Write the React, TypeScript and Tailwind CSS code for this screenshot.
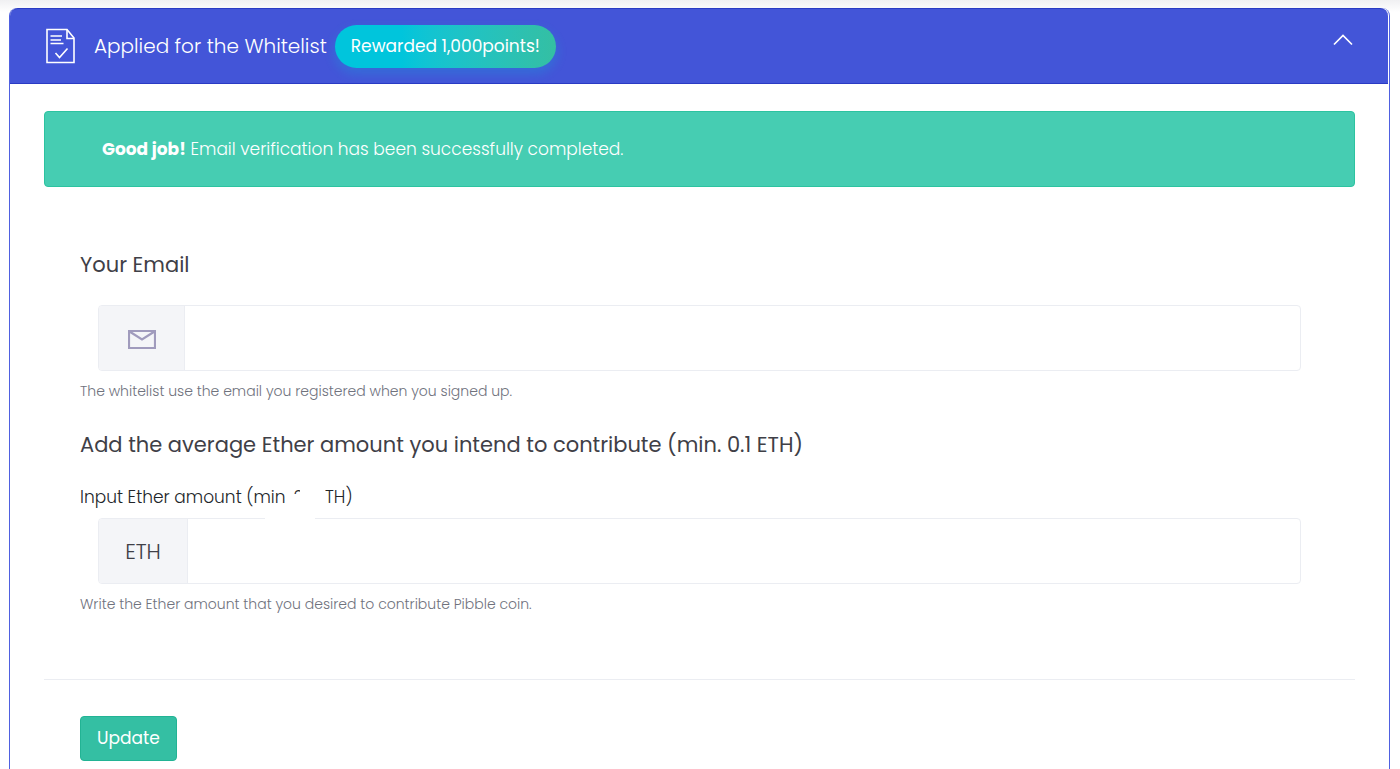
import type { ReactNode } from 'react';

interface FieldProps {
  id: string;
  type: string;
  addon: ReactNode;
  addonClass: string;
  hint: string;
}

function DocumentCheckIcon() {
  return (
    <svg width="30" height="36" viewBox="0 0 30 36" fill="none" stroke="white" strokeWidth="1.6" aria-hidden="true">
      <path d="M1 1.5H21L28 10V34.5H1Z" />
      <path d="M21 1.5V10.5H28" />
      <path d="M4.5 8H16M4.5 12H15M4.5 15.5H17.5" />
      <path d="M9.5 25L13.5 29.5L21.5 20.5" />
    </svg>
  );
}

function MailIcon() {
  return (
    <svg width="28" height="20" viewBox="0 0 28 20" fill="none" stroke="#a09bbd" strokeWidth="2.2" aria-hidden="true">
      <path d="M1 2H27V19H1Z" />
      <path d="M1.5 2.5L14 10.5L26.5 2.5" />
    </svg>
  );
}

function Field({ id, type, addon, addonClass, hint }: FieldProps) {
  return (
    <div>
      <div className="mx-[18px] flex h-[66px] overflow-hidden rounded border border-[#ebedf2] bg-white">
        <span className={`flex shrink-0 items-center justify-center border-r border-[#ebedf2] bg-[#f4f5f8] pt-0.5 ${addonClass}`}>
          {addon}
        </span>
        <input
          id={id}
          type={type}
          aria-describedby={`${id}-hint`}
          className="min-w-0 flex-1 bg-transparent px-5 text-lg text-[#575962] outline-none"
        />
      </div>
      <p id={`${id}-hint`} className="mt-2 text-sm leading-6 font-light text-[#6f727d]">
        {hint}
      </p>
    </div>
  );
}

export default function App() {
  return (
    <main className="bg-gradient-to-b from-[#f0f0f2] to-white to-[12px] px-[9px] pt-2 font-[Poppins,Inter,sans-serif]">
      <section className="mr-px rounded-lg border-x border-[#4f60e0] bg-white pb-9">
        <header className="mr-px flex h-[76px] items-center rounded-t-lg border-y border-[#2a3bc4] bg-[#4355d8] pr-[35px] pl-9 text-white">
          <DocumentCheckIcon />
          <h1 className="ml-[18px] text-xl font-light">Applied for the Whitelist</h1>
          <span className="ml-2 flex h-[43px] items-center rounded-full bg-gradient-to-r from-[#00c5dc] from-30% to-[#34bfa3] px-4 pt-0.5 text-[17px] shadow-[0_5px_10px_2px_rgba(0,197,220,0.19)]">
            Rewarded 1,000points!
          </span>
          <button type="button" aria-label="Collapse" className="mb-3 ml-auto">
            <svg width="20" height="12" viewBox="0 0 20 12" fill="none" stroke="white" strokeWidth="1.7" aria-hidden="true">
              <path d="M1 10.5L10 1.5L19 10.5" />
            </svg>
          </button>
        </header>

        <div className="px-[34px] pt-[27px]">
          <div role="alert" className="flex h-[76px] items-center rounded border border-[#2cc3a0] bg-[#46cdb2] px-[57px] pt-0.5 text-[17px] font-light text-white">
            <p>
              <strong className="font-bold">Good job!</strong> Email verification has been successfully completed.
            </p>
          </div>

          <form className="mt-[62px]" onSubmit={(e) => e.preventDefault()}>
            <div className="px-9">
              <label htmlFor="email" className="mb-6 block text-[21px] leading-8 text-[#3f4047]">
                Your Email
              </label>
              <Field
                id="email"
                type="email"
                addon={<MailIcon />}
                addonClass="w-[86px]"
                hint="The whitelist use the email you registered when you signed up."
              />

              <h2 className="mt-[26px] text-[21px] leading-8 text-[#3f4047]">
                Add the average Ether amount you intend to contribute (min. 0.1 ETH)
              </h2>
              <div className="relative mt-6">
                <label htmlFor="ether" className="mb-[9px] block text-[17px] leading-6 font-light text-[#212529]">
                  Input Ether amount (min. 0.1 ETH)
                </label>
                <Field
                  id="ether"
                  type="text"
                  addon={<span className="text-[21px] leading-8 font-light text-[#3f4047]">ETH</span>}
                  addonClass="w-[89px]"
                  hint="Write the Ether amount that you desired to contribute Pibble coin."
                />
                <svg
                  className="pointer-events-none absolute top-0 left-[184px]"
                  width="64"
                  height="48"
                  viewBox="0 0 64 48"
                  fill="white"
                  aria-hidden="true"
                >
                  <path d="M21 14L27 9H36V0H61V9L64 15V19L51 22V42H1V24H21Z" />
                </svg>
              </div>
            </div>

            <div className="mt-[63px] border-t border-[#ebedf2] px-9 pt-9">
              <button
                type="submit"
                className="h-[45px] rounded border border-[#22b394] bg-[#34bfa3] px-4 text-[17px] text-white"
              >
                Update
              </button>
            </div>
          </form>
        </div>
      </section>
    </main>
  );
}
